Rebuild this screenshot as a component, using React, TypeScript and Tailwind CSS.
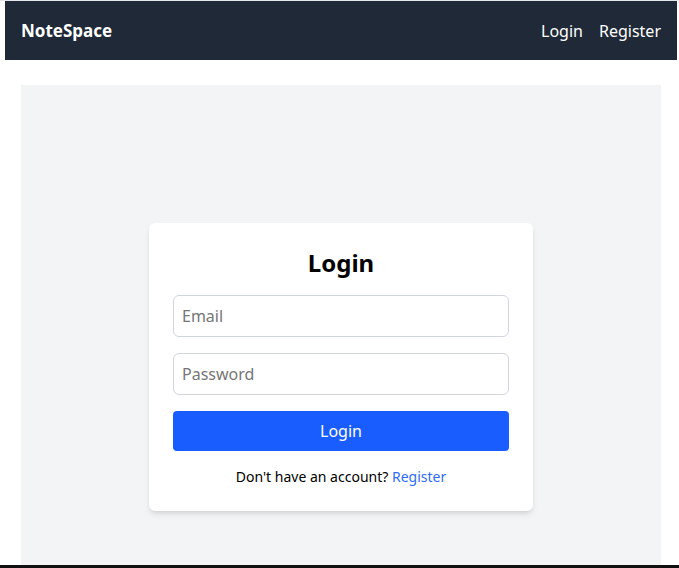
const Navbar = () => {
  return (
    <nav className="h-[59px] bg-[#1f2937] px-4 flex items-center justify-between text-white">
      <span className="text-[17px] font-bold leading-7">NoteSpace</span>
      <div className="flex items-center gap-4 text-base">
        <a href="#">Login</a>
        <a href="#">Register</a>
      </div>
    </nav>
  );
};

const LoginCard = () => {
  return (
    <div className="w-[384px] bg-white rounded-md shadow-md p-6">
      <h2 className="text-2xl font-bold text-center mb-4 text-black">Login</h2>
      <form className="flex flex-col gap-4" onSubmit={(e) => e.preventDefault()}>
        <input
          type="email"
          placeholder="Email"
          className="w-full border border-gray-300 rounded-md px-2 py-2 text-base leading-6 placeholder:text-[#767676] outline-none"
        />
        <input
          type="password"
          placeholder="Password"
          className="w-full border border-gray-300 rounded-md px-2 py-2 text-base leading-6 placeholder:text-[#767676] outline-none"
        />
        <button className="w-full bg-[#195cff] text-white rounded py-2 text-base leading-6">
          Login
        </button>
      </form>
      <p className="mt-4 text-sm text-center text-black">
        Don't have an account? <a href="#" className="text-[#2f6bf5]">Register</a>
      </p>
    </div>
  );
};

export default function App() {
  return (
    <div
      className="h-screen bg-white px-[5px] overflow-hidden border-t border-gray-200"
      style={{ fontFamily: '"Noto Sans", "Open Sans", sans-serif' }}
    >
      <div className="w-[672px]">
        <Navbar />
        <main className="px-4 mt-[25px]">
          <div className="h-[564px] bg-gray-100 flex items-center justify-center">
            <LoginCard />
          </div>
        </main>
      </div>
      <div className="fixed bottom-0 left-0 right-0 h-[3px] bg-[#111]" />
    </div>
  );
}
